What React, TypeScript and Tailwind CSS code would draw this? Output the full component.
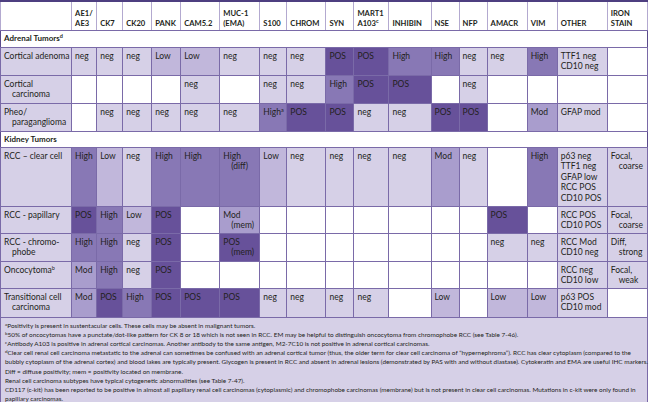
import React from "react";

/* column widths measured from the reference */
const colWidths = [71, 25, 26, 29, 29, 39, 40, 27, 39, 28, 35, 42, 28, 28, 40, 30, 50, 40];

const headers = [
  "",
  "AE1/\nAE3",
  "CK7",
  "CK20",
  "PANK",
  "CAM5.2",
  "MUC-1\n(EMA)",
  "S100",
  "CHROM",
  "SYN",
  "MART1\nA103^c",
  "INHIBIN",
  "NSE",
  "NFP",
  "AMACR",
  "VIM",
  "OTHER",
  "IRON\nSTAIN",
];

type Row = { h: string; cells: string[] };

const adrenal: Row[] = [
  {
    h: "h-[28px]",
    cells: ["Cortical adenoma", "neg", "neg", "neg", "Low", "Low", "neg", "neg", "neg", "POS", "POS", "High", "High", "neg", "neg", "High", "TTF1 neg\nCD10 neg", ""],
  },
  {
    h: "h-[28px]",
    cells: ["Cortical\ncarcinoma", "", "", "", "", "neg", "", "neg", "neg", "High", "POS", "POS", "", "neg", "", "", "", ""],
  },
  {
    h: "h-[28px]",
    cells: ["Pheo/\nparaganglioma", "", "neg", "neg", "neg", "neg", "neg", "High^a", "POS", "POS", "neg", "neg", "POS", "POS", "", "Mod", "GFAP mod", ""],
  },
];

const kidney: Row[] = [
  {
    h: "h-[59px]",
    cells: ["RCC – clear cell", "High", "Low", "neg", "High", "High", "High\n(diff)", "Low", "neg", "neg", "neg", "neg", "Mod", "neg", "", "High", "p63 neg\nTTF1 neg\nGFAP low\nRCC POS\nCD10 POS", "Focal,\ncoarse"],
  },
  {
    h: "h-[27px]",
    cells: ["RCC - papillary", "POS", "High", "Low", "POS", "", "Mod\n(mem)", "", "", "", "", "", "", "", "POS", "", "RCC POS\nCD10 POS", "Focal,\ncoarse"],
  },
  {
    h: "h-[28px]",
    cells: ["RCC - chromo-\nphobe", "High", "High", "neg", "POS", "", "POS\n(mem)", "", "", "", "", "", "", "", "neg", "neg", "RCC Mod\nCD10 neg", "Diff,\nstrong"],
  },
  {
    h: "h-[27px]",
    cells: ["Oncocytoma^b", "Mod", "High", "neg", "POS", "", "", "", "", "", "", "", "", "", "", "", "RCC neg\nCD10 low", "Focal,\nweak"],
  },
  {
    h: "h-[29px]",
    cells: ["Transitional cell\ncarcinoma", "Mod", "POS", "High", "POS", "POS", "POS", "neg", "neg", "neg", "neg", "", "Low", "", "Low", "Low", "p63 POS\nCD10 mod", ""],
  },
];

const footnotes = [
  ["a", "Positivity is present in sustentacular cells. These cells may be absent in malignant tumors."],
  ["b", "50% of oncocytomas have a punctate/dot-like pattern for CK 8 or 18 which is not seen in RCC. EM may be helpful to distinguish oncocytoma from chromophobe RCC (see Table 7-46)."],
  ["c", "Antibody A103 is positive in adrenal cortical carcinomas. Another antibody to the same antigen, M2-7C10 is not positive in adrenal cortical carcinomas."],
  ["d", "Clear cell renal cell carcinoma metastatic to the adrenal can sometimes be confused with an adrenal cortical tumor (thus, the older term for clear cell carcinoma of “hypernephroma”). RCC has clear cytoplasm (compared to the"],
  ["", "bubbly cytoplasm of the adrenal cortex) and blood lakes are typically present. Glycogen is present in RCC and absent in adrenal lesions (demonstrated by PAS with and without diastase). Cytokeratin and EMA are useful IHC markers."],
  ["", "Diff = diffuse positivity; mem = positivity located on membrane."],
  ["", "Renal cell carcinoma subtypes have typical cytogenetic abnormalities (see Table 7-47)."],
  ["", "CD117 (c-kit) has been reported to be positive in almost all papillary renal cell carcinomas (cytoplasmic) and chromophobe carcinomas (membrane) but is not present in clear cell carcinomas. Mutations in c-kit were only found in"],
  ["", "papillary carcinomas."],
];

function levelBg(text: string, col: number) {
  if (!text) return "bg-white";
  if (col === 0 || col >= 16) return "bg-[#d6d0e7]";
  if (text.startsWith("POS")) return "bg-[#67519a]";
  if (text.startsWith("High")) return "bg-[#8878b5]";
  if (text.startsWith("Mod")) return "bg-[#a99dcd]";
  if (text.startsWith("Low")) return "bg-[#c1b7db]";
  return "bg-[#d6d0e7]";
}

function Line({ text }: { text: string }) {
  const [main, sup] = text.split("^");
  return (
    <>
      {main}
      {sup && <sup className="text-[5.5px] top-[-3px]">{sup}</sup>}
    </>
  );
}

function CellText({ text, plain }: { text: string; plain?: boolean }) {
  const lines = text.split("\n");
  return (
    <>
      {lines.map((l, i) => (
        <div key={i} className={`whitespace-nowrap ${i > 0 && !plain ? "pl-[8px]" : ""}`}>
          <Line text={l} />
        </div>
      ))}
    </>
  );
}

function SectionRow({ title, sup, h }: { title: string; sup?: string; h: string }) {
  return (
    <tr className={h}>
      <td
        colSpan={18}
        className="border-y border-[#7a6aa8] bg-white pl-[3px] align-middle font-bold text-[8px]"
      >
        {title}
        {sup && <sup className="text-[5.5px] top-[-3px] font-bold">{sup}</sup>}
      </td>
    </tr>
  );
}

function BodyRows({ rows }: { rows: Row[] }) {
  return (
    <>
      {rows.map((r, ri) => (
        <tr key={ri} className={r.h}>
          {r.cells.map((c, ci) => (
            <td
              key={ci}
              className={`border border-[#7a6aa8] align-top pt-[3px] pl-[3px] pr-[1px] ${levelBg(c, ci)}`}
            >
              <CellText text={c} plain={ci === 16} />
            </td>
          ))}
        </tr>
      ))}
    </>
  );
}

export default function App() {
  return (
    <div className="w-[650px] h-[402px] overflow-hidden bg-white font-[Lato,sans-serif] text-[#231f20]">
      <table className="table-fixed border-collapse w-[648px] text-[8.5px] leading-[10.5px] border-x border-[#5a4a8c]">
        <colgroup>
          {colWidths.map((w, i) => (
            <col key={i} style={{ width: w }} />
          ))}
        </colgroup>
        <thead>
          {/* 헤더 */}
          <tr className="h-[29px]">
            {headers.map((h, i) => (
              <th
                key={i}
                className="border-t-2 border-t-[#4e3f80] border-b border-b-[#7a6aa8] border-x border-x-[#b3a9d0] align-bottom text-left font-bold text-[7.6px] leading-[10px] pl-[3px] pb-[2px] bg-white"
              >
                <CellText text={h} plain />
              </th>
            ))}
          </tr>
        </thead>
        <tbody>
          <SectionRow title="Adrenal Tumors" sup="d" h="h-[17px]" />
          <BodyRows rows={adrenal} />
          <SectionRow title="Kidney Tumors" h="h-[16px]" />
          <BodyRows rows={kidney} />
          {/* 각주 */}
          <tr className="h-[84px]">
            <td
              colSpan={18}
              className="border border-[#7a6aa8] border-b-2 border-b-[#4e3f80] bg-[#d6d0e7] align-top pl-[4px] pt-[3px] text-[6.4px] leading-[9.2px]"
            >
              {footnotes.map(([s, t], i) => (
                <div key={i} className="whitespace-nowrap">
                  {s && <sup className="text-[4.5px] top-[-2px]">{s}</sup>}
                  {t}
                </div>
              ))}
            </td>
          </tr>
        </tbody>
      </table>
    </div>
  );
}
